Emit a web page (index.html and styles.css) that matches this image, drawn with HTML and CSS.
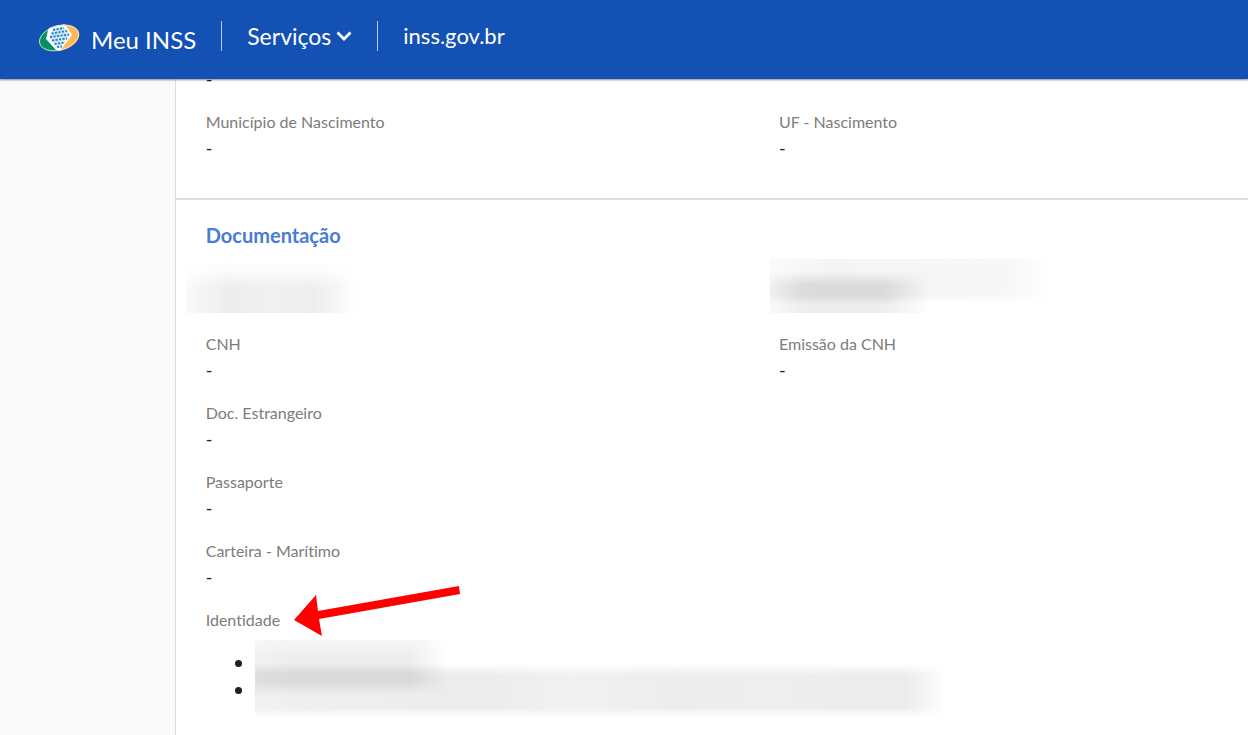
FILE: index.html
```html
<!DOCTYPE html>
<html lang="pt-BR">
<head>
<meta charset="utf-8">
<meta name="viewport" content="width=device-width, initial-scale=1">
<title>Meu INSS</title>
<link rel="stylesheet" href="styles.css">
</head>
<body>
<header class="topbar">
  <a class="brand" href="#">
    <svg class="logo" viewBox="0 0 42 28" aria-hidden="true">
      <defs>
        <clipPath id="oval"><ellipse cx="21" cy="14" rx="20.8" ry="12.8" transform="rotate(-16 21 14)"/></clipPath>
      </defs>
      <g clip-path="url(#oval)">
        <path fill="#079160" d="M0 0h21v28H0z"/>
        <path fill="#ffb957" d="M24 0h18v28H21z"/>
        <path fill="#fff" d="M11 2 27 0l7 11-12 16-4-1-10-11z"/>
        <path fill="#d5ebf6" d="m15 5 7-2 5 1 5 7-10 13-3-1-8-9z"/>
        <g fill="none" stroke="#2583c4" stroke-width="2" stroke-dasharray="2.2 1.3">
          <path d="m15 6 11-2M13.500 9.500 29 7M12 13l19-2.500M14 16.500l15-2M16.500 20l10-1.500M19 23l5-.5"/>
        </g>
      </g>
      <ellipse cx="21" cy="14" rx="20" ry="12" transform="rotate(-16 21 14)" fill="none" stroke="#d9e8e8" stroke-width=".8"/>
    </svg>
    <span class="brand-name">Meu INSS</span>
  </a>
  <nav class="nav">
    <button class="nav-item" type="button">Serviços
      <svg class="chevron" viewBox="0 0 16 10" aria-hidden="true"><path d="m1.5 1.500 6.500 6.500 6.500-6.500" fill="none" stroke="currentColor" stroke-width="2.8"/></svg>
    </button>
    <a class="nav-item" href="#">inss.gov.br</a>
  </nav>
</header>
<div class="page">
  <main class="card">
    <section class="section section-birth">
      <div class="value">-</div>
      <dl class="fields">
        <div><dt>Município de Nascimento</dt><dd>-</dd></div>
        <div><dt>UF - Nascimento</dt><dd>-</dd></div>
      </dl>
    </section>
    <section class="section section-docs">
      <h2>Documentação</h2>
      <div class="fields hidden-fields">
        <div class="hidden-field"><span class="smudge smudge-a"></span></div>
        <div class="hidden-field"><span class="smudge smudge-b"></span><span class="smudge smudge-c"></span></div>
      </div>
      <dl class="fields">
        <div><dt>CNH</dt><dd>-</dd></div>
        <div><dt>Emissão da CNH</dt><dd>-</dd></div>
        <div class="wide"><dt>Doc. Estrangeiro</dt><dd>-</dd></div>
        <div class="wide"><dt>Passaporte</dt><dd>-</dd></div>
        <div class="wide"><dt>Carteira - Marítimo</dt><dd>-</dd></div>
        <div class="wide identity">
          <dt>Identidade</dt>
          <dd>
            <ul class="id-list"><li></li><li></li></ul>
            <span class="smudge smudge-e"></span><span class="smudge smudge-d"></span>
          </dd>
          <svg class="arrow" viewBox="0 0 167 51" aria-hidden="true"><path fill="#f00" d="M0 34 22 9l2 16L165 0l1 8L25 33l3 17z"/></svg>
        </div>
      </dl>
    </section>
  </main>
</div>
</body>
</html>
```
FILE: styles.css
```css
* { box-sizing: border-box; }
body {
  margin: 0;
  min-height: 100vh;
  display: flex;
  flex-direction: column;
  background: #fafafa;
  color: #212121;
  font-family: Lato, "Open Sans", sans-serif;
  font-size: 16px;
  font-variant-ligatures: none;
  line-height: 26px;
}
.topbar {
  position: relative;
  z-index: 2;
  display: flex;
  align-items: center;
  height: 79px;
  padding: 0 38px 4px;
  background: #1351b4;
  color: #fff;
  box-shadow: 0 1px 2px rgba(0, 0, 0, .45);
}
.brand {
  display: flex;
  align-items: center;
  gap: 11px;
  color: inherit;
  text-decoration: none;
}
.logo { width: 42px; height: 28px; }
.brand-name { padding-top: 4px; font-size: 24px; }
.nav {
  display: flex;
  margin-left: 25px;
  padding-bottom: 4px;
}
.nav-item {
  display: flex;
  align-items: center;
  gap: 5px;
  height: 30px;
  padding: 0 25px;
  border: 0;
  border-left: 1px solid #b8cbe9;
  background: none;
  color: inherit;
  font: inherit;
  font-size: 22px;
  text-decoration: none;
}
button.nav-item { font-size: 23px; }
.chevron { width: 16px; height: 10px; }
.page {
  flex: 1;
  display: flex;
  padding-left: 14%;
}
.card {
  flex: 1;
  border-left: 1px solid #dedede;
  background: #fff;
}
.section { padding: 22px 0 24px 30px; }
.section-birth {
  margin-top: -13px;
  padding-top: 0;
  padding-bottom: 37px;
  border-bottom: 2px solid #dedede;
}
.section-birth .value { margin-bottom: 17px; }
h2 {
  margin: 0 0 14px;
  color: #477dd2;
  font-size: 20px;
  line-height: 26px;
}
.fields {
  display: grid;
  grid-template-columns: 55fr 45fr;
  row-gap: 17px;
  margin: 0;
}
.wide { grid-column: 1 / -1; }
dt { color: #7c7c7c; }
dd { margin: 0; }
dd, .value { font-size: 18px; }
.hidden-fields { margin-bottom: 17px; }
.hidden-field { position: relative; height: 52px; }
.identity { position: relative; }
.identity dd { position: relative; padding-top: 17px; }
.id-list {
  margin: 0;
  padding-left: 29px;
  list-style: none;
}
.id-list li {
  height: 27px;
  display: flex;
  align-items: center;
}
.id-list li::before {
  content: "";
  width: 7px;
  height: 7px;
  border-radius: 50%;
  background: #212121;
}
.arrow {
  position: absolute;
  left: 88px;
  top: -21px;
  width: 167px;
}
.smudge { position: absolute; }
.smudge-a {
  left: -20px;
  top: 1px;
  width: 170px;
  height: 50px;
  background: linear-gradient(90deg, #fafafa, #ededed 25%, #f0f0f0 50%, #eee 75%, #f5f5f5 88%, #fff);
  -webkit-mask-image: linear-gradient(rgba(0, 0, 0, .2) 15%, #000 50%);
  mask-image: linear-gradient(rgba(0, 0, 0, .2) 15%, #000 50%);
}
.smudge-b {
  left: -9px;
  top: -3px;
  width: 282px;
  height: 44px;
  background: linear-gradient(90deg, #fafafa, #f5f5f5 20%, #f7f7f7 85%, #fff);
  -webkit-mask-image: linear-gradient(#000 80%, transparent);
  mask-image: linear-gradient(#000 80%, transparent);
}
.smudge-c {
  left: -9px;
  top: 9px;
  width: 162px;
  height: 42px;
  background: linear-gradient(90deg, rgba(0, 0, 0, .04), rgba(0, 0, 0, .11) 20%, rgba(0, 0, 0, .11) 70%, transparent);
  -webkit-mask-image: linear-gradient(transparent, #000 35%, #000 60%, rgba(0, 0, 0, .6) 85%);
  mask-image: linear-gradient(transparent, #000 35%, #000 60%, rgba(0, 0, 0, .6) 85%);
}
.smudge-d {
  left: 49px;
  top: 7px;
  width: 194px;
  height: 55px;
  background: linear-gradient(#f5f5f5, #eee 30%, #eee 40%, #d9d9d9 62%, #d9d9d9 75%, #eee);
  -webkit-mask-image: linear-gradient(90deg, rgba(0, 0, 0, .8), #000 20%, #000 80%, transparent);
  mask-image: linear-gradient(90deg, rgba(0, 0, 0, .8), #000 20%, #000 80%, transparent);
}
.smudge-e {
  left: 49px;
  top: 31px;
  width: 692px;
  height: 54px;
  background: linear-gradient(90deg, #f0f0f0, #ececec 32%, #f1f1f1 46%, #ededed 60%, #eee 75%, #ececec 94%, #fff);
  -webkit-mask-image: linear-gradient(transparent, #000 20%, #000 80%, transparent);
  mask-image: linear-gradient(transparent, #000 20%, #000 80%, transparent);
}
```
